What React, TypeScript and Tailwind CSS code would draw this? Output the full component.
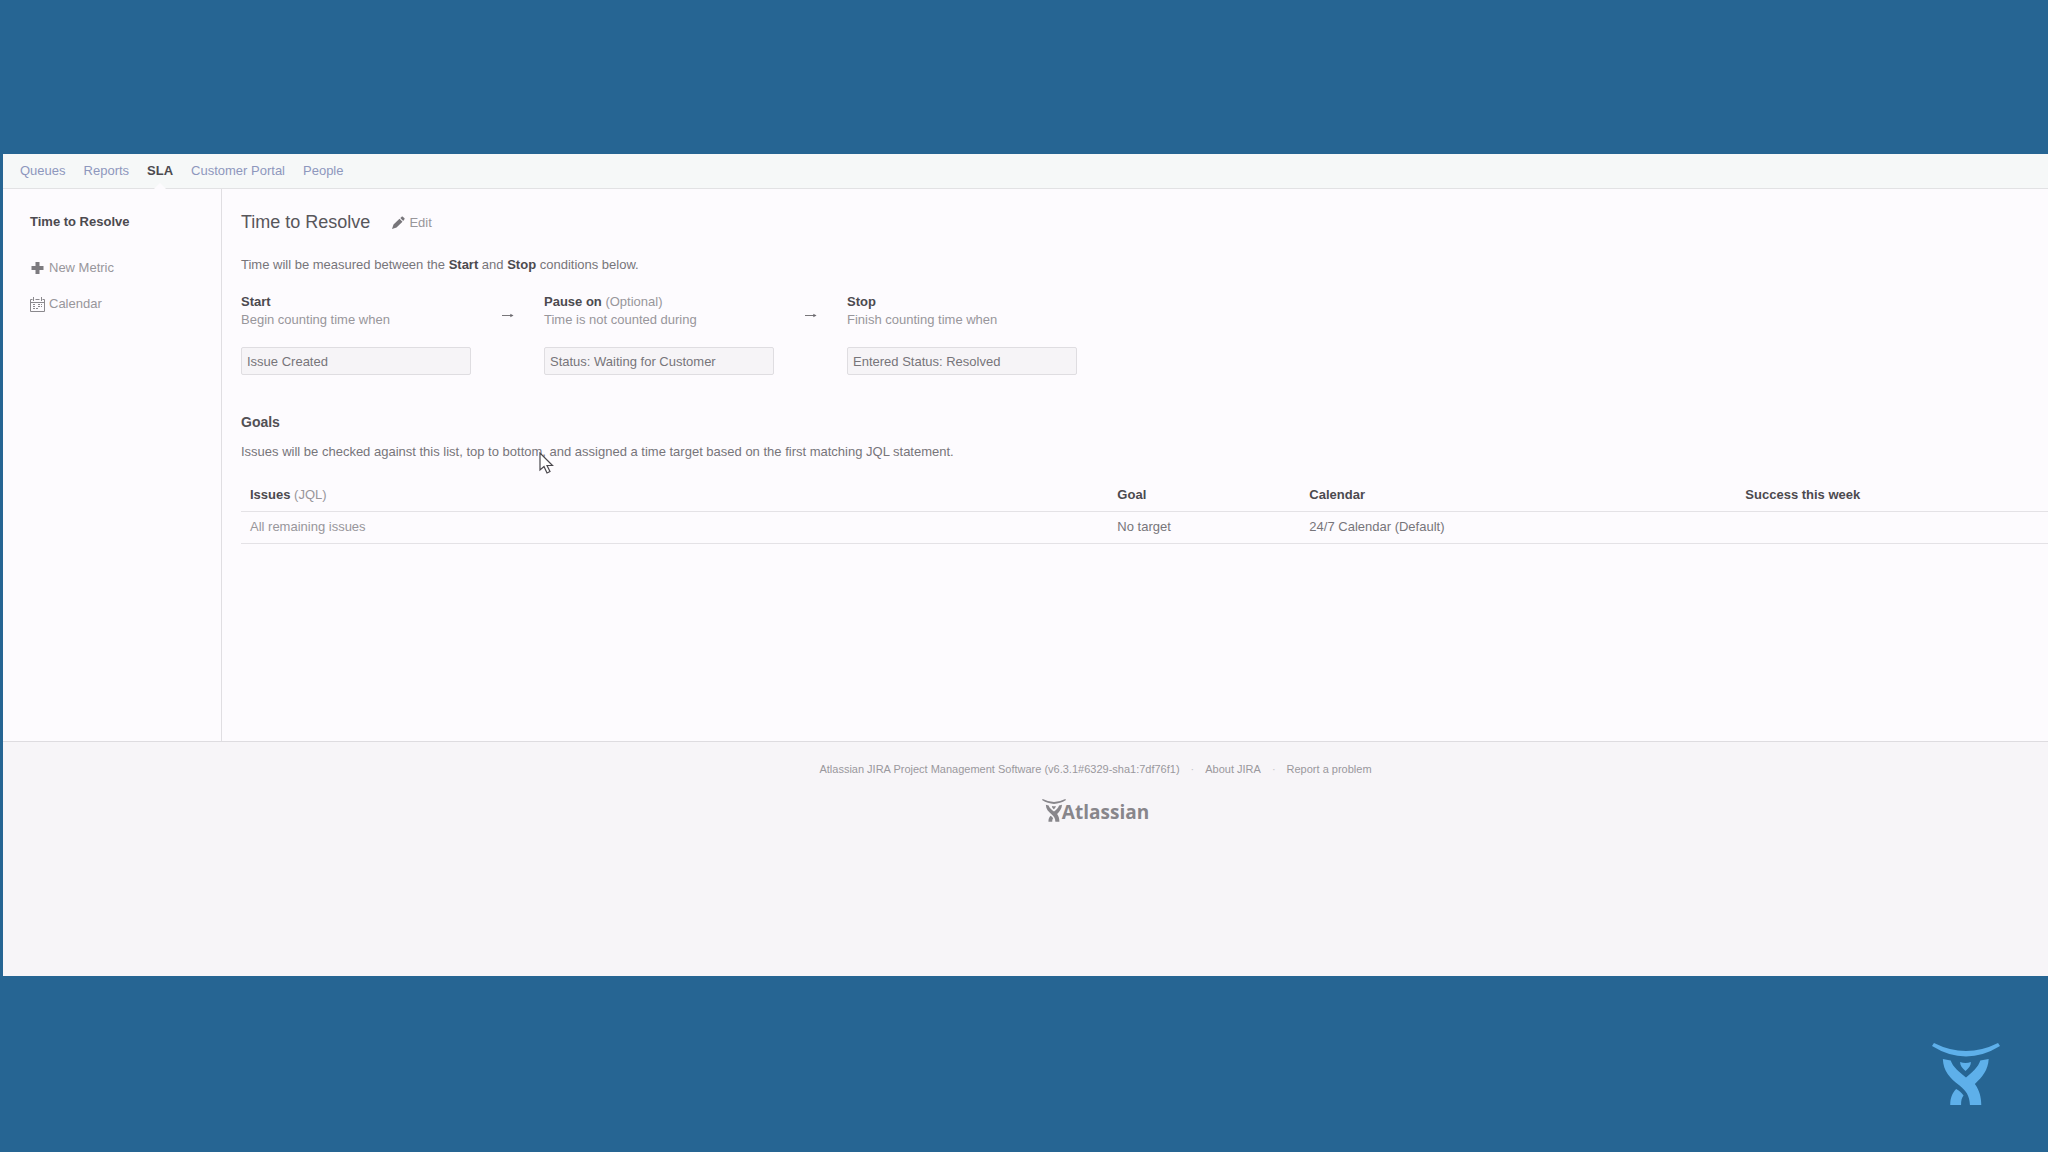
import { Fragment } from 'react';

interface Condition {
  id: string;
  title: string;
  note?: string;
  hint: string;
  value: string;
}

interface Goal {
  issues: string;
  goal: string;
  calendar: string;
  success: string;
}

const tabs = ['Queues', 'Reports', 'SLA', 'Customer Portal', 'People'];

const conditions: Condition[] = [
  { id: 'start', title: 'Start', hint: 'Begin counting time when', value: 'Issue Created' },
  { id: 'pause', title: 'Pause on', note: '(Optional)', hint: 'Time is not counted during', value: 'Status: Waiting for Customer' },
  { id: 'stop', title: 'Stop', hint: 'Finish counting time when', value: 'Entered Status: Resolved' },
];

const goals: Goal[] = [
  { issues: 'All remaining issues', goal: 'No target', calendar: '24/7 Calendar (Default)', success: '' },
];

export default function App() {
  return (
    <div className="relative flex min-h-screen flex-col bg-[#266593] pt-[154px] pl-[3px] font-['Liberation_Sans',Arial,sans-serif] text-[13px] leading-[18px] text-[#77757a]">
      <div className="flex flex-col bg-[#fdfbfe]">
        <TabBar />
        <div className="flex min-h-[552px]">
          <Sidebar />
          <main className="min-w-0 flex-1 pt-[21px] pl-[19px]">
            <div className="flex items-center gap-[22px]">
              <h1 className="text-[18px] leading-[24px] text-[#58565b]">Time to Resolve</h1>
              <button className="flex items-center gap-1 pt-[2px] text-[#98969b]">
                <PencilIcon />
                Edit
              </button>
            </div>
            <p className="mt-[22px]">
              Time will be measured between the <b className="text-[#4c4a4f]">Start</b> and{' '}
              <b className="text-[#4c4a4f]">Stop</b> conditions below.
            </p>
            <Conditions />
            <h2 className="mt-[37px] text-[14px] leading-[20px] font-bold text-[#525055]">Goals</h2>
            <p className="mt-[11px]">
              Issues will be checked against this list, top to bottom, and assigned a time target based on the first matching JQL statement.
            </p>
            <GoalsTable />
          </main>
        </div>
        <Footer />
      </div>

      <PointerIcon />
      <CharlieLogo className="absolute right-[48px] bottom-[46px] h-[63px] w-[68px] text-[#5eb0ea]" />
    </div>
  );
}

function TabBar() {
  return (
    <nav className="flex h-[35px] items-center gap-[18px] border-b border-[#e2e2e4] bg-[#f6f8f8] pl-[17px]">
      {tabs.map((tab) =>
        tab === 'SLA' ? (
          <a key={tab} href="#sla" aria-current="page" className="relative flex h-[34px] items-center font-bold text-[#4c4a4f]">
            {tab}
            {/* Notch under the active tab */}
            <svg className="absolute -bottom-px left-1/2 -translate-x-1/2" width="12" height="6" viewBox="0 0 14 7">
              <path d="M0 7 7 0l7 7z" fill="#fdfbfe" />
            </svg>
          </a>
        ) : (
          <a key={tab} href="#" className="text-[#8e97bd]">
            {tab}
          </a>
        )
      )}
    </nav>
  );
}

function Sidebar() {
  return (
    <aside className="w-[219px] shrink-0 border-r border-[#e0dee2] pt-[24px] pl-[27px]">
      <a href="#metric" className="block font-bold text-[#4c4a4f]">Time to Resolve</a>
      <div className="mt-[28px] flex flex-col items-start gap-[18px] text-[#98969b]">
        <button className="flex items-center gap-1">
          <svg width="15" height="14" viewBox="0 0 15 14" fill="#7c7a7f" aria-hidden="true">
            <path d="M5.500 1h4v4h4v4h-4v4h-4V9h-4V5h4z" />
          </svg>
          New Metric
        </button>
        <button className="flex items-center gap-1">
          <CalendarIcon />
          Calendar
        </button>
      </div>
    </aside>
  );
}

function Conditions() {
  return (
    <div className="mt-[19px] flex">
      {conditions.map((condition, index) => (
        <Fragment key={condition.id}>
          {index > 0 && (
            <div className="flex w-[73px] justify-center pt-[18px]">
              <svg width="12" height="9" viewBox="0 0 13 9" fill="none" stroke="#6c6a6f" aria-hidden="true">
                <path d="M0 4.500h10" />
                <path d="M9 2.500l3.500 2-3.500 2z" fill="#6c6a6f" stroke="none" />
              </svg>
            </div>
          )}
          <div className="w-[230px]">
            <label htmlFor={condition.id} className="block text-[#98969b]">
              <b className="text-[#4c4a4f]">{condition.title}</b> {condition.note}
              <br />
              {condition.hint}
            </label>
            <input
              id={condition.id}
              readOnly
              value={condition.value}
              className="mt-[18px] h-[28px] w-full rounded-[2px] border border-[#dfdde1] bg-[#f6f4f7] px-[5px] text-[#77757a] outline-none"
            />
          </div>
        </Fragment>
      ))}
    </div>
  );
}

function GoalsTable() {
  return (
    <table className="mt-[25px] w-full table-fixed text-left">
      <thead>
        <tr className="h-[25px] border-b border-[#e4e2e6] align-top text-[#4c4a4f]">
          <th className="w-[48%] pl-[9px]">
            Issues <span className="font-normal text-[#98969b]">(JQL)</span>
          </th>
          <th className="w-[192px] pl-[9px]">Goal</th>
          <th className="w-[436px] pl-[9px]">Calendar</th>
          <th className="pl-[9px]">Success this week</th>
        </tr>
      </thead>
      <tbody>
        {goals.map((row) => (
          <tr key={row.issues} className="h-[32px] border-b border-[#e4e2e6]">
            <td className="pl-[9px] text-[#98969b]">{row.issues}</td>
            <td className="pl-[9px]">{row.goal}</td>
            <td className="pl-[9px]">{row.calendar}</td>
            <td className="pl-[9px]">{row.success}</td>
          </tr>
        ))}
      </tbody>
    </table>
  );
}

function Footer() {
  return (
    <footer className="flex min-h-[235px] flex-col items-center border-t border-[#dedce0] bg-[#f7f5f8] pt-[18px] pl-[140px] text-[11px] text-[#9a989d]">
      <div className="flex items-center gap-[11px]">
        <span>Atlassian JIRA Project Management Software (v6.3.1#6329-sha1:7df76f1)</span>
        <span className="text-[#c4c2c7]">·</span>
        <a href="#about">About JIRA</a>
        <span className="text-[#c4c2c7]">·</span>
        <a href="#report">Report a problem</a>
      </div>
      <a href="#atlassian" className="mt-[21px] flex items-end text-[#88868b]">
        <CharlieLogo className="mb-[2px] h-[23px] w-[24px]" />
        <span className="-ml-1 font-['Open_Sans',sans-serif] text-[19px] leading-[24px] font-bold">Atlassian</span>
      </a>
    </footer>
  );
}

function CharlieLogo({ className }: { className: string }) {
  return (
    <svg className={className} viewBox="0 0 69 63" preserveAspectRatio="none" fill="currentColor" aria-hidden="true">
      <path d="M2 0Q34.500 16 67 0L69 3Q34.500 24 0 3Z" />
      <path d="M11 16L19 17.500C21 24 28 29 34.500 34.500C41 29 47 24 49 17.500L57.500 16C57 27 51 34 43.500 41C48 47 50 54 50 62H38.500C38 52 34.500 48 28 42.500C18 35 11.500 28 11 16Z" />
      <path d="M24.500 46C20.500 50 18.500 55 18.500 62H29.500C29.500 57.500 30 55 32 52.500C30 49.500 27.500 47.500 24.500 46Z" />
      <path d="M28.500 19Q34 21 39.500 19C39.500 22.500 37.500 25 34 28C30.500 25 28.500 22.500 28.500 19Z" />
    </svg>
  );
}

function PencilIcon() {
  return (
    <svg width="13" height="14" viewBox="0 0 13 14" fill="#77757a" aria-hidden="true">
      <path d="M0 13l1.500-4.500L7.500 2.800l3 3L4.500 11.500zM8.300 2l1.200-1.100c.5-.4 1-.4 1.500 0l1.300 1.200c.5.5.5 1 0 1.500L11.200 5z" />
    </svg>
  );
}

function CalendarIcon() {
  return (
    <svg width="15" height="15" viewBox="0 0 15 15" fill="none" stroke="#8a888d" aria-hidden="true">
      <path d="M2.500 2.500h-2v12h14v-12h-2M5.500 2.500h4M3.500 0v4M11.500 0v4M.5 5.500h14" />
      <path d="M3 7.500h3M8 7.500h4M3 9.500h3M8 9.500h4M3 11.500h6" strokeDasharray="2 1" />
    </svg>
  );
}

function PointerIcon() {
  return (
    <svg className="absolute top-[452px] left-[539px]" width="15" height="23" viewBox="0 0 15 23" aria-hidden="true">
      <path d="M1 1v17l4-3.500 3 6.500 3-1.500-3-6h5.500z" fill="#fff" stroke="#4a484d" strokeWidth="1.200" />
    </svg>
  );
}
